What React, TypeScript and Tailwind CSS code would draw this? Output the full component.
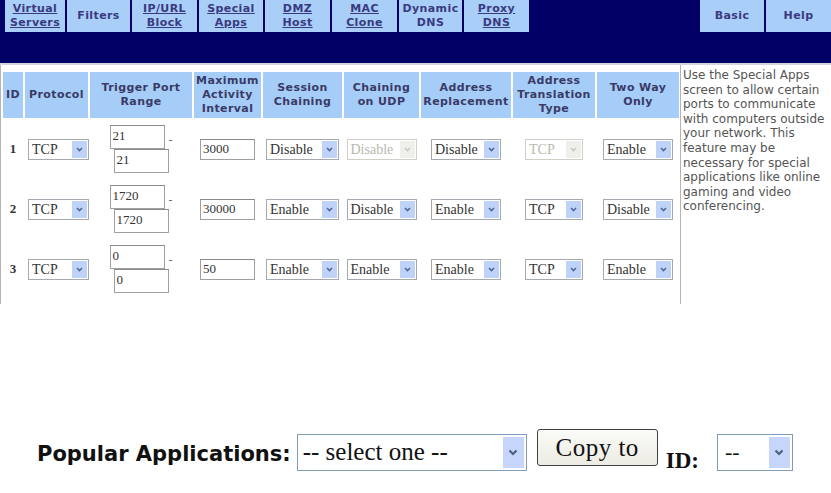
import React from 'react';

const navLeft = [
  { top: 'Virtual', bottom: 'Servers', w: 'w-[60px]', link: true },
  { top: 'Filters', bottom: '', w: 'w-[63px]', link: false },
  { top: 'IP/URL', bottom: 'Block', w: 'w-[65px]', link: true },
  { top: 'Special', bottom: 'Apps', w: 'w-[64px]', link: true },
  { top: 'DMZ', bottom: 'Host', w: 'w-[65px]', link: true },
  { top: 'MAC', bottom: 'Clone', w: 'w-[65px]', link: true },
  { top: 'Dynamic', bottom: 'DNS', w: 'w-[63px]', link: false },
  { top: 'Proxy', bottom: 'DNS', w: 'w-[65px]', link: true },
];

function Tab({ top, bottom, w, link }: { top: string; bottom: string; w: string; link: boolean }) {
  return (
    <div
      className={`flex h-[32px] flex-col items-center justify-center bg-[#a9cef8] text-center text-[11px] font-bold leading-[14px] tracking-[0.4px] text-[#3a3a80] ${w} ${
        link ? 'underline' : ''
      }`}
    >
      <span>{top}</span>
      {bottom && <span>{bottom}</span>}
    </div>
  );
}

function Chevron({ color, size = 'small' }: { color: string; size?: 'small' | 'big' }) {
  return size === 'big' ? (
    <svg width="10" height="7" viewBox="0 0 10 7">
      <path d="M1.5 1.5 L5 5 L8.5 1.5" fill="none" stroke={color} strokeWidth="2.2" />
    </svg>
  ) : (
    <svg width="7" height="5" viewBox="0 0 7 5">
      <path d="M1 1 L3.5 3.5 L6 1" fill="none" stroke={color} strokeWidth="1.6" />
    </svg>
  );
}

function Sel({ value, w, disabled }: { value: string; w: string; disabled?: boolean }) {
  return (
    <div
      className={`flex h-[21px] items-stretch border bg-white ${w} ${
        disabled ? 'border-[#d0cfc8]' : 'border-[#a5a9b0]'
      }`}
    >
      <span
        className={`flex-1 overflow-hidden whitespace-nowrap pl-[3px] font-['Liberation_Serif',serif] text-[14px] leading-[19px] ${
          disabled ? 'text-[#b8b8b0]' : 'text-[#333]'
        }`}
      >
        {value}
      </span>
      <span
        className={`m-px flex w-[15px] items-center justify-center ${disabled ? 'bg-[#efefec]' : 'bg-[#bfd2f8]'}`}
      >
        <Chevron color={disabled ? '#c8c8c0' : '#4f6a9a'} />
      </span>
    </div>
  );
}

function Box({ value, w }: { value: string; w: string }) {
  return (
    <div
      className={`h-[24px] border border-[#a0a0a0] border-t-[#8a8a8a] bg-white pl-[2px] font-['Liberation_Serif',serif] text-[13px] leading-[20px] text-[#333] ${w}`}
    >
      {value}
    </div>
  );
}

const headers = [
  ['ID'],
  ['Protocol'],
  ['Trigger Port', 'Range'],
  ['Maximum', 'Activity', 'Interval'],
  ['Session', 'Chaining'],
  ['Chaining', 'on UDP'],
  ['Address', 'Replacement'],
  ['Address', 'Translation', 'Type'],
  ['Two Way', 'Only'],
];

const rows = [
  { id: '1', from: '21', to: '21', max: '3000', sess: 'Disable', udp: 'Disable', udpOff: true, repl: 'Disable', tcpOff: true, two: 'Enable' },
  { id: '2', from: '1720', to: '1720', max: '30000', sess: 'Enable', udp: 'Disable', udpOff: false, repl: 'Enable', tcpOff: false, two: 'Disable' },
  { id: '3', from: '0', to: '0', max: '50', sess: 'Enable', udp: 'Enable', udpOff: false, repl: 'Enable', tcpOff: false, two: 'Enable' },
];

const help = [
  'Use the Special Apps',
  'screen to allow certain',
  'ports to communicate',
  'with computers outside',
  'your network. This',
  'feature may be',
  'necessary for special',
  'applications like online',
  'gaming and video',
  'conferencing.',
];

export default function App() {
  return (
    <div className="h-[493px] w-[831px] overflow-hidden bg-white font-['DejaVu_Sans',sans-serif]">
      <div className="flex h-[63px] justify-between bg-[#000066]">
        <div className="flex gap-[2px] pl-[5px]">
          {navLeft.map((t) => (
            <Tab key={t.top} {...t} />
          ))}
        </div>
        <div className="flex gap-[2px]">
          <Tab top="Basic" bottom="" w="w-[64px]" link={false} />
          <Tab top="Help" bottom="" w="w-[65px]" link={false} />
        </div>
      </div>
      <div className="h-[2px] bg-[#d4d4de]" />

      <div className="flex">
        <div className="w-[680px] border-l border-[#b4b4b4] pb-[6px] pl-[2px] pt-[7px]">
          <div className="grid grid-cols-[20px_63px_102px_67px_79px_75px_90px_82px_82px] gap-[2px]">
            {headers.map((h) => (
              <div
                key={h.join()}
                className="flex h-[46px] flex-col items-center justify-center bg-[#a6cdf7] text-center text-[11px] font-bold leading-[14px] tracking-[0.4px] text-[#3a3a66]"
              >
                {h.map((l) => (
                  <span key={l} className="whitespace-nowrap">
                    {l}
                  </span>
                ))}
              </div>
            ))}
            {rows.map((r) => (
              <React.Fragment key={r.id}>
                <div className="flex h-[58px] items-center justify-center font-['Liberation_Serif',serif] text-[13px] font-bold text-[#333]">
                  {r.id}
                </div>
                <div className="flex items-center pl-[3px]">
                  <Sel value="TCP" w="w-[61px] shrink-0" />
                </div>
                <div className="flex flex-col items-center justify-center">
                  <div className="flex items-start">
                    <Box value={r.from} w="w-[55px]" />
                    <span className="pl-[4px] pt-[9px] text-[11px] leading-[12px] text-[#555]">-</span>
                  </div>
                  <Box value={r.to} w="w-[55px]" />
                </div>
                <div className="flex items-center justify-center">
                  <div className="h-[21px] w-[55px] border border-[#a0a0a0] border-t-[#8a8a8a] bg-white pl-[2px] font-['Liberation_Serif',serif] text-[13px] leading-[18px] text-[#333]">
                    {r.max}
                  </div>
                </div>
                <div className="flex items-center justify-center">
                  <Sel value={r.sess} w="w-[73px]" />
                </div>
                <div className="flex items-center justify-center">
                  <Sel value={r.udp} w="w-[70px]" disabled={r.udpOff} />
                </div>
                <div className="flex items-center justify-center">
                  <Sel value={r.repl} w="w-[70px]" />
                </div>
                <div className="flex items-center justify-center">
                  <Sel value="TCP" w="w-[58px]" disabled={r.tcpOff} />
                </div>
                <div className="flex items-center justify-center">
                  <Sel value={r.two} w="w-[70px]" />
                </div>
              </React.Fragment>
            ))}
          </div>
        </div>
        <div className="flex-1 border-l border-[#b4b4b4] pl-[2px] pt-[3px] text-[12px] leading-[14.6px] text-[#555]">
          {help.map((l) => (
            <div key={l} className="whitespace-nowrap">
              {l}
            </div>
          ))}
        </div>
      </div>

      <div className="mt-[125px] flex items-start pl-[37px]">
        <span className="mt-[13px] whitespace-nowrap text-[21px] font-bold leading-[24px] text-[#111]">
          Popular Applications:
        </span>
        <div className="ml-[6px] mt-[5px] flex h-[37px] w-[230px] items-stretch border border-[#7f9db9] bg-white">
          <span className="flex-1 whitespace-nowrap pl-[5px] font-['Liberation_Serif',serif] text-[25px] leading-[33px] text-[#111]">
            -- select one --
          </span>
          <span className="m-[2px] flex w-[21px] items-center justify-center bg-[#c6d6fb]">
            <Chevron color="#4d6185" size="big" />
          </span>
        </div>
        <div className="ml-[10px] flex h-[37px] w-[121px] items-center justify-center rounded-[3px] border border-[#404040] bg-gradient-to-b from-[#fbfbf8] to-[#ecebe4] font-['Liberation_Serif',serif] text-[25px] leading-[28px] tracking-[0.5px] text-[#111]">
          Copy to
        </div>
        <span className="ml-[8px] mt-[20px] font-['Liberation_Serif',serif] text-[23px] font-bold leading-[24px] text-[#111]">
          ID:
        </span>
        <div className="ml-[18px] mt-[5px] flex h-[37px] w-[76px] items-stretch border border-[#7f9db9] bg-white">
          <span className="flex-1 pl-[7px] font-['Liberation_Serif',serif] text-[22px] leading-[33px] text-[#111]">--</span>
          <span className="m-[2px] flex w-[21px] items-center justify-center bg-[#c6d6fb]">
            <Chevron color="#4d6185" size="big" />
          </span>
        </div>
      </div>
    </div>
  );
}
